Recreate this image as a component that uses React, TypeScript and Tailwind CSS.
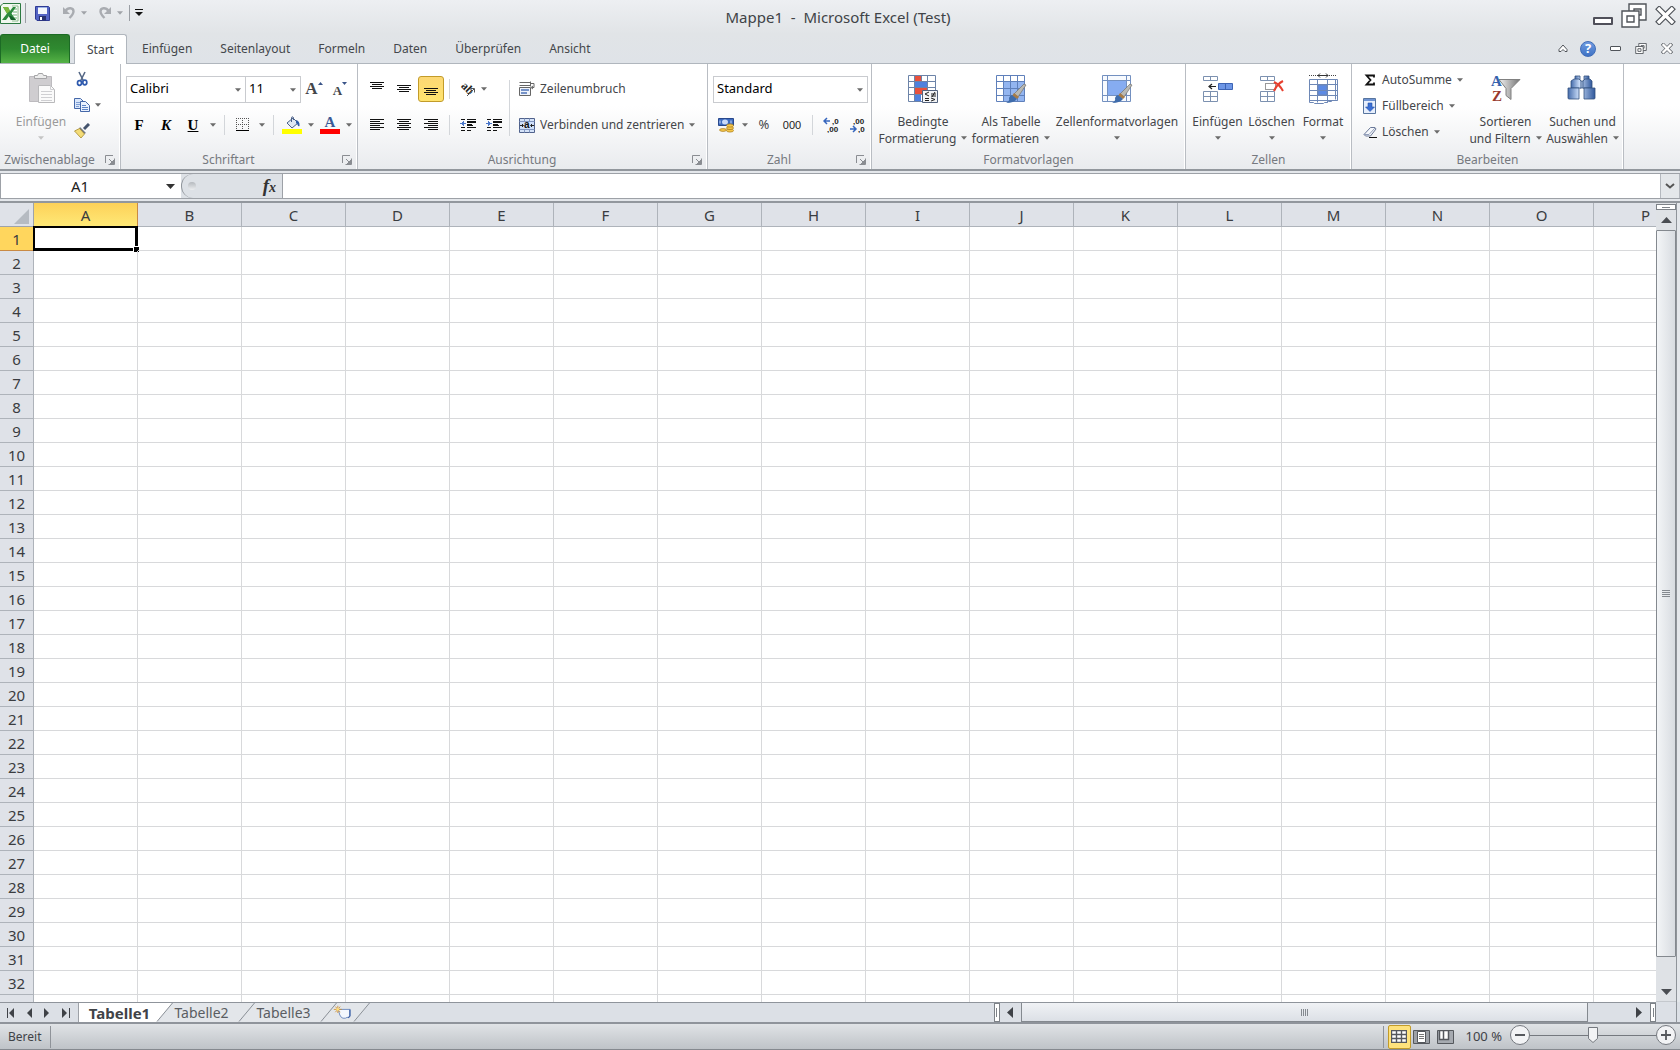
import React from 'react';

const COLUMNS = 'ABCDEFGHIJKLMNOP'.split('');
const ROWS = Array.from({ length: 32 }, (_, i) => i + 1);
const TABS = ['Einfügen', 'Seitenlayout', 'Formeln', 'Daten', 'Überprüfen', 'Ansicht'];

const Arrow: React.FC<{ className?: string }> = ({ className = 'text-[#6b6b6b]' }) => (
    <svg width="6" height="4" viewBox="0 0 7 4" className={`shrink-0 ${className}`} aria-hidden="true">
        <path d="M0 0h7L3.500 4z" fill="currentColor" />
    </svg>
);

const ArrowButton: React.FC<{ label: string; className?: string }> = ({ label, className }) => (
    <button type="button" aria-label={label} className="flex h-7 w-3 shrink-0 items-center justify-center">
        <Arrow className={className} />
    </button>
);

const Separator: React.FC = () => <div className="mx-[5px] h-5 w-px shrink-0 bg-[#d3d6da]" />;

const IconButton: React.FC<{ label: string; active?: boolean; children: React.ReactNode }> = ({ label, active, children }) => (
    <button
        type="button"
        aria-label={label}
        className={`flex h-[26px] w-[26px] shrink-0 items-center justify-center ${active ? 'rounded-[3px] border border-[#c29b29] bg-linear-to-b from-[#fcd874] to-[#ffe46e]' : ''}`}
    >
        {children}
    </button>
);

const BigButton: React.FC<{ lines: string[]; icon: React.ReactNode; className: string; disabled?: boolean }> = ({ lines, icon, className, disabled }) => (
    <button
        type="button"
        disabled={disabled}
        className={`flex shrink-0 flex-col items-center pt-[9px] leading-[17px] whitespace-nowrap ${disabled ? 'text-[#9a9a9a]' : ''} ${className}`}
    >
        {icon}
        <span className="mt-2">{lines[0]}</span>
        <span className="flex h-4 items-center gap-[5px]">
            {lines[1]}
            <Arrow className={disabled ? 'text-[#c4c4c4]' : undefined} />
        </span>
    </button>
);

const SmallButton: React.FC<{ text?: string; label?: string; icon: React.ReactNode; arrow?: boolean }> = ({ text, label, icon, arrow = true }) => (
    <button type="button" aria-label={label} className="flex h-[26px] items-center gap-[5px] whitespace-nowrap">
        {icon}
        {text && <span>{text}</span>}
        {arrow && <Arrow />}
    </button>
);

const Group: React.FC<{ title: string; width: string; launcher?: boolean; children: React.ReactNode }> = ({ title, width, launcher, children }) => (
    <section className={`flex shrink-0 flex-col border-r border-[#b9bdc3] shadow-[inset_-1px_0_#fff] ${width}`}>
        <div className="flex h-[86px]">{children}</div>
        <div className="flex h-[19px] items-center pt-px text-[#76797f]">
            <h2 className="flex-1 text-center">{title}</h2>
            {launcher && (
                <button type="button" aria-label={`${title} Optionen`} className="mr-[5px] ml-1.5 flex">
                    <svg width="10" height="10" viewBox="0 0 10 10">
                        <path d="M.5 8V.5H8M3.500 9.500h6v-6" fill="none" stroke="#8a8d92" />
                        <path d="M4 4l4 4M5 9h4V5z" stroke="#8a8d92" fill="#8a8d92" />
                    </svg>
                </button>
            )}
        </div>
    </section>
);

const Lines: React.FC<{ rows: number[][] }> = ({ rows }) => (
    <svg width="14" height="16" viewBox="0 0 14 16" stroke="#111" shapeRendering="crispEdges">
        {rows.map(([x1, x2, y]) => (
            <path key={y} d={`M${x1} ${y + 0.5}H${x2}`} />
        ))}
    </svg>
);

const vLines = (top: number) => [[0, 14, top], [2, 12, top + 2], [0, 14, top + 4], [2, 12, top + 6]];

const ExcelLogo = () => (
    <svg width="21" height="21" viewBox="0 0 21 21">
        <path d="M3 .5h17.500v20H.5V3z" fill="#f1f8ef" stroke="#2c7a41" />
        <path d="M12 3h6v15h-6" fill="#fff" stroke="#8cba8d" />
        <path d="M13 6h4M13 9h4M13 12h4M13 15h4" stroke="#6faf74" />
        <path d="M3 4h5l2 4 3-4h3l-4.500 6.500L16 17h-5l-2-4-3 4H2l5-6.500z" fill="#2c8a3d" />
        <path d="M3 4h5l2 4-3 2.500z" fill="#79b83d" />
        <path d="M11 13l5 4h-5l-2-4z" fill="#155f2b" />
    </svg>
);

const SaveIcon = () => (
    <svg width="15" height="15" viewBox="0 0 15 15">
        <path d="M.5.5h13l1 1v13H2l-1.500-1.500z" fill="#5363c4" stroke="#2f3b94" />
        <path d="M3 1h9v7H3z" fill="#f3f6fc" />
        <path d="M3 1h9v1H3z" fill="#9db4e6" />
        <path d="M4 10h7v4.500H4z" fill="#283170" />
        <path d="M5 11h2v3H5z" fill="#fff" />
    </svg>
);

const UndoIcon: React.FC<{ flip?: boolean }> = ({ flip }) => (
    <svg width="14" height="14" viewBox="0 0 14 14">
        <g transform={flip ? 'translate(14 0) scale(-1 1)' : undefined}>
            <path d="M3.500 5C6 1 11.500 1.500 11.500 5.500c0 2.500-1.500 4-4 6.500" fill="none" stroke="#a9acb1" strokeWidth="2.400" />
            <path d="M1 1v7h7z" fill="#a9acb1" />
        </g>
    </svg>
);

const PasteIcon = () => (
    <svg width="32" height="32" viewBox="0 0 32 32">
        <path d="M4.500 3.500h22v25h-22z" fill="#cfcdd0" stroke="#bdbbbf" />
        <path d="M9.500 5.500v-3h3l1-2h4l1 2h3v3z" fill="#ececec" stroke="#a5a5a7" />
        <path d="M13.500 12.500h12l4 4v13h-16z" fill="#fafafa" stroke="#b9b9bb" />
        <path d="M25.500 12.500v4h4M16 18.500h11M16 21.500h11M16 24.500h11M16 27.500h11" fill="none" stroke="#cfcfd2" />
    </svg>
);

const CutIcon = () => (
    <svg width="16" height="16" viewBox="0 0 16 16" fill="none">
        <path d="M5 1l4.500 9M11 1L6.500 10" stroke="#566886" strokeWidth="1.600" />
        <ellipse cx="5.500" cy="12" rx="2" ry="2.300" stroke="#2f5aae" strokeWidth="1.700" />
        <ellipse cx="10.800" cy="11.500" rx="2" ry="2.300" stroke="#2f5aae" strokeWidth="1.700" />
    </svg>
);

const CopyIcon = () => (
    <svg width="16" height="16" viewBox="0 0 16 16" stroke="#4568a9">
        <path d="M.5 1.500h6l3 3v7h-9z" fill="#dbe8fb" />
        <path d="M2 5.500h5M2 7.500h5M2 9.500h3" stroke="#7f9fd4" />
        <path d="M6.500 4.500h5l4 4v6h-9z" fill="#eaf2ff" />
        <path d="M8 8.500h4M8 10.500h6M8 12.500h6" stroke="#5d84c6" />
    </svg>
);

const BrushIcon = () => (
    <svg width="16" height="16" viewBox="0 0 16 16">
        <path d="M15 1l-5 5" stroke="#43536d" strokeWidth="3" />
        <path d="M6 4l6 6-2 1-5-5z" fill="#6f7682" />
        <path d="M5.500 5.500L.5 8 7 15l3.500-4z" fill="#f4dc77" stroke="#a68a30" strokeWidth=".8" />
    </svg>
);

const BorderIcon = () => (
    <svg width="14" height="14" viewBox="0 0 14 14" shapeRendering="crispEdges">
        <path d="M.5 0v12M6.500 0v12M12.500 0v12M0 .5h13M0 6.500h13" stroke="#555" strokeDasharray="1 1" />
        <path d="M0 12.500h13" stroke="#000" strokeWidth="1" />
    </svg>
);

const FillIcon = () => (
    <svg width="20" height="18" viewBox="0 0 20 18">
        <path d="M5 7l6-5 5 5-6 5z" fill="#dfe8f4" stroke="#4a6188" />
        <path d="M9.500 6V1.500q0-1.500 2 0V4" fill="none" stroke="#4a6188" />
        <path d="M14 4q4 1 3.500 6-1.500 1-2-1.500L14 7z" fill="#2d5ca8" />
        <path d="M0 13h20v5H0z" fill="#ffff00" />
    </svg>
);

const OrientationIcon = () => (
    <svg width="18" height="18" viewBox="0 0 18 18">
        <text x="1" y="8" transform="rotate(45 3 8)" fontFamily="Liberation Serif, serif" fontSize="12" fontWeight="bold" fill="#222">ab</text>
        <path d="M8 16l7-7M11.500 8.500h4v4" fill="none" stroke="#555" />
    </svg>
);

const IndentIcon: React.FC<{ right?: boolean }> = ({ right }) => (
    <svg width="16" height="14" viewBox="0 0 16 14" shapeRendering="crispEdges">
        <path d="M1 1.500h4M7 1.500h9M7 4h9M7 7h6M1 9.500h4M7 9.500h9M1 12.500h4M7 12.500h4" stroke="#111" />
        <path d="M7 4h9M7 7h5" stroke="#111" strokeWidth="2" />
        <path d={right ? 'M0 5h2V3l4 2.500L2 8V6H0z' : 'M6 5H4V3L0 5.500 4 8V6h2z'} fill="#4a76c9" />
    </svg>
);

const WrapIcon = () => (
    <svg width="16" height="16" viewBox="0 0 16 16" fill="none">
        <path d="M.5 1.500h11M.5 4.500h11M11.500.5v5" stroke="#666" />
        <path d="M.5 6.500h11v8H.5z" fill="#eef3fb" stroke="#666" />
        <path d="M2 9h8M2 12h6" stroke="#4d73b8" strokeWidth="1.500" />
        <path d="M12 2.500h3v4h-2M14 5l-2 1.500L14 8" stroke="#666" />
    </svg>
);

const MergeIcon = () => (
    <svg width="16" height="15" viewBox="0 0 16 15">
        <path d="M.5.5h15v14H.5z" fill="#d4e2f8" stroke="#50628c" />
        <path d="M.5 3.500h15M.5 11.500h15M5.500.5v3M10.500.5v3M5.500 11.500v3M10.500 11.500v3" stroke="#8297c1" />
        <path d="M1 4h14v7H1z" fill="#cfdff9" />
        <path d="M1 7.500h3M12 7.500h3M3 6l1.500 1.500L3 9M13 6l-1.500 1.500L13 9" stroke="#222" fill="none" />
        <text x="5" y="10" fontFamily="Liberation Sans, sans-serif" fontSize="10" fontWeight="bold" fill="#111">a</text>
    </svg>
);

const MoneyIcon = () => (
    <svg width="16" height="16" viewBox="0 0 16 16">
        <path d="M.5 1.500h15v7H.5z" fill="#3d6bc0" stroke="#28488c" />
        <ellipse cx="7" cy="5" rx="3" ry="2.500" fill="#c9dafa" />
        <path d="M2 3.500v3M13 3.500v3" stroke="#c9dafa" />
        <g fill="#f4c64a" stroke="#a87a1a" strokeWidth=".7">
            <ellipse cx="12" cy="13.500" rx="3.500" ry="1.600" />
            <ellipse cx="12" cy="11" rx="3.500" ry="1.600" />
            <ellipse cx="12" cy="8.500" rx="3.500" ry="1.600" />
            <ellipse cx="5" cy="13" rx="3.500" ry="1.400" />
        </g>
    </svg>
);

const DecimalIcon: React.FC<{ more?: boolean }> = ({ more }) => (
    <svg width="16" height="16" viewBox="0 0 16 16" fontFamily="Liberation Sans, sans-serif" fontSize="8" fontWeight="bold" fill="#222">
        <text x={more ? 9 : 4} y="7">{more ? ',0' : ',00'}</text>
        <text x={more ? 4 : 9} y="15">{more ? ',00' : ',0'}</text>
        <path d={more ? 'M7 4H1M4 1L1 4l3 3' : 'M1 12h6M4 9l3 3-3 3'} fill="none" stroke="#3565bd" strokeWidth="1.500" />
    </svg>
);

const Brush32 = () => (
    <>
        <path d="M29 11l2 1-8 12-4-3z" fill="#b9b9b4" stroke="#76736b" strokeWidth=".7" />
        <path d="M19 20l5 4-2 2-5-3z" fill="#a87c46" />
        <path d="M17 22l5 4q-3 4-11 4 4-2 3-5 1-3 3-3z" fill="#3f6cab" />
    </>
);

const ConditionalIcon = () => (
    <svg width="32" height="32" viewBox="0 0 32 32">
        <path d="M1.500 2.500h27v26h-27z" fill="#fff" />
        <path d="M8 3h7v5H8zM8 15h12v6H8z" fill="#e8503c" />
        <path d="M8 9h12v5H8zM8 22h6v6H8z" fill="#4f80dd" />
        <path d="M1.500 2.500h27v26h-27zM7.500 2.500v26M14.500 2.500v5M20.500 2.500v26M1.500 8.500h27M1.500 14.500h27M1.500 21.500h27" fill="none" stroke="#6c83a8" />
        <path d="M15.500 17.500h15v12h-15z" fill="#f3f4f6" stroke="#53627c" />
        <path d="M22 19l-4 2 4 2M18 25.500h4M18 27.500h4M24 21h5M24 23h5M28 19l-3 5M24 25l4 1.500-4 1.500" fill="none" stroke="#222" />
    </svg>
);

const TableIcon = () => (
    <svg width="32" height="32" viewBox="0 0 32 32">
        <path d="M1.500 2.500h28v26h-28z" fill="#fff" />
        <path d="M8 8h21v20H8z" fill="#93b5f0" />
        <path d="M1.500 2.500h28v26h-28zM8.500 2.500v26M15.500 2.500v26M22.500 2.500v26M1.500 8.500h28M1.500 15.500h28M1.500 22.500h28" fill="none" stroke="#5f80bb" />
        <Brush32 />
    </svg>
);

const StyleIcon = () => (
    <svg width="32" height="32" viewBox="0 0 32 32">
        <path d="M1.500 2.500h28v26h-28z" fill="#f7fafe" />
        <path d="M7 8h18v14H7z" fill="#86acf1" />
        <path d="M1.500 2.500h28v26h-28zM6.500 2.500v26M25.500 2.500v26M1.500 7.500h28M1.500 22.500h28" fill="none" stroke="#7390c0" />
        <Brush32 />
    </svg>
);

const InsertIcon = () => (
    <svg width="32" height="32" viewBox="0 0 32 32" fill="#fff" stroke="#7c91b0">
        <path d="M1.500 3.500h14v4h-14zM8.500 3.500v4M1.500 18.500h14v10h-14zM8.500 18.500v10M1.500 23.500h14" />
        <path d="M16.500 10.500h14v6h-14z" fill="#6d96e6" stroke="#3d64b4" />
        <path d="M23.500 10.500v6" stroke="#3d64b4" />
        <path d="M14 13.500H8M10 11l-3 2.500 3 2.500" fill="none" stroke="#222" strokeWidth="1.200" />
    </svg>
);

const DeleteIcon = () => (
    <svg width="32" height="32" viewBox="0 0 32 32" fill="#fff" stroke="#7c91b0">
        <path d="M4.500 3.500h14v4h-14zM11.500 3.500v4M4.500 18.500h14v10h-14zM11.500 18.500v10M4.500 23.500h14" />
        <path d="M9.500 10.500h10v6h-10z" fill="none" stroke="#333" strokeDasharray="1 1" />
        <path d="M18 9q6 3 9 9M27 8q-6 3-9 10" fill="none" stroke="#e7402f" strokeWidth="2" />
    </svg>
);

const FormatIcon = () => (
    <svg width="32" height="32" viewBox="0 0 32 32" fill="#fff" stroke="#6e88b6">
        <path d="M2.500 6.500h28v21h-5l-1 1h-3l-1 1h-3l-1 1h-9l-1-1h-4z" />
        <path d="M11 12h9v10h-9z" fill="#5c8ae4" />
        <path d="M10.500 6.500v23M20.500 6.500v23M28.500 6.500v20M2.500 11.500h28M2.500 17.500h28M2.500 22.500h28M2.500 27.500h28" fill="none" />
        <path d="M2 2.500h27" stroke="#444" strokeDasharray="1 1" />
        <path d="M11 2.500h10M13 .5l-2 2 2 2M19 .5l2 2-2 2" fill="none" stroke="#333" />
    </svg>
);

const SortIcon = () => (
    <svg width="32" height="32" viewBox="0 0 32 32" fontWeight="bold" fontFamily="Liberation Serif, serif" fontSize="15">
        <defs>
            <linearGradient id="funnel">
                <stop offset="0" stopColor="#f1f1f1" />
                <stop offset="1" stopColor="#747474" />
            </linearGradient>
        </defs>
        <path d="M9 6.500h21l-9 9v11l-5-4v-7z" fill="url(#funnel)" stroke="#808080" />
        <text x="1" y="13" fill="#3562ad">A</text>
        <text x="2" y="28" fill="#9a3a2e">Z</text>
    </svg>
);

const FindIcon = () => (
    <svg width="32" height="32" viewBox="0 0 32 32" stroke="#33507f">
        <defs>
            <linearGradient id="lens">
                <stop offset="0" stopColor="#456cab" />
                <stop offset=".4" stopColor="#c8dbf7" />
                <stop offset="1" stopColor="#30589c" />
            </linearGradient>
        </defs>
        <g fill="url(#lens)" strokeWidth=".8">
            <path d="M8 3h5v4H8zM17 3h5v4h-5zM13 8h4v7h-4z" />
            <path d="M7 6h5l2 2v7H4V8zM18 6h5l2 2v7h-9V8z" />
            <path d="M1 15h11v11H2q-1 0-1-1zM17 15h11v10q0 1-1 1H17z" />
        </g>
    </svg>
);

const SigmaIcon = () => (
    <svg width="14" height="14" viewBox="0 0 14 14">
        <path d="M11 4.500V2.500H3.500l4 4.500-4 4.500H11v-2" fill="none" stroke="#111" strokeWidth="1.800" />
    </svg>
);

const FillDownIcon = () => (
    <svg width="14" height="16" viewBox="0 0 14 16">
        <path d="M.5.5h12v15H.5z" fill="#e7effc" stroke="#57759f" />
        <path d="M1 1h11v2H1z" fill="#6f94d3" />
        <path d="M5 5h4v4h2.500L7 13.500 2.500 9H5z" fill="#3b6fd4" stroke="#2451a8" strokeWidth=".6" />
    </svg>
);

const EraserIcon = () => (
    <svg width="14" height="14" viewBox="0 0 14 14">
        <path d="M7.500 2.500h4.500l1 1.500-5.500 7h-5L1 9.500z" fill="#f6f8fc" stroke="#6a7898" />
        <path d="M1 9.500h5L12 3" fill="none" stroke="#93a0bb" />
        <path d="M6 12.500h8" stroke="#111" />
    </svg>
);

const CrossIcon: React.FC<{ size: string; width: number }> = ({ size, width }) => (
    <svg viewBox="0 0 20 18" className={size} fill="none" strokeLinecap="square">
        <path d="M4 3l12 12M16 3L4 15" stroke="#50545a" strokeWidth={width} />
        <path d="M4 3l12 12M16 3L4 15" stroke="#fff" strokeWidth={width - 2.2} />
    </svg>
);

const RestoreIcon: React.FC<{ size: string; stroke: number }> = ({ size, stroke }) => (
    <svg viewBox="0 0 26 25" className={size} fill="#fff" stroke="#50545a" strokeWidth={stroke}>
        <path d="M8 1h17v16H8zM13 6h7v6h-7z" />
        <path d="M1 8h17v16H1zM6 13h7v6H6z" />
    </svg>
);

const TitleBar = () => (
    <header className="flex h-[34px] shrink-0 bg-linear-to-b from-[#edeff2] to-[#e1e4e7]">
        <div className="flex flex-1 items-start pt-[3px]">
            <ExcelLogo />
            <div className="mx-1 h-5 w-px bg-[#9a9ea4]" />
            <div className="flex h-5 items-center pl-[5px]">
                <button type="button" aria-label="Speichern"><SaveIcon /></button>
                <button type="button" aria-label="Rückgängig" disabled className="ml-3"><UndoIcon /></button>
                <ArrowButton label="Rückgängig Liste" className="ml-1 text-[#a0a3a8]" />
                <button type="button" aria-label="Wiederholen" disabled className="ml-2.5"><UndoIcon flip /></button>
                <ArrowButton label="Wiederholen Liste" className="ml-1 text-[#a0a3a8]" />
                <div className="mx-[5px] h-4 w-px bg-[#9a9ea4]" />
                <button type="button" aria-label="Symbolleiste anpassen">
                    <svg width="8" height="8" viewBox="0 0 8 8">
                        <path d="M0 .5h8" stroke="#111" />
                        <path d="M0 3h8L4 7z" fill="#111" />
                    </svg>
                </button>
            </div>
        </div>
        <h1 className="pt-[7px] text-[15px] leading-[21px] whitespace-pre text-[#404347]">Mappe1  -  Microsoft Excel (Test)</h1>
        <div className="flex flex-1 justify-end gap-2 pt-[3px] pr-1">
            <button type="button" aria-label="Minimieren" className="mt-[14px] h-2 w-5 rounded-[1px] border-2 border-[#50505a] bg-white" />
            <button type="button" aria-label="Wiederherstellen" className="flex"><RestoreIcon size="h-[25px] w-[26px]" stroke={1.4} /></button>
            <button type="button" aria-label="Schließen" className="flex pt-[3px]"><CrossIcon size="h-[19px] w-[21px]" width={5.5} /></button>
        </div>
    </header>
);

const TabBar = () => (
    <nav className="flex h-[30px] shrink-0 border-b border-[#b0b6bd] bg-linear-to-b from-[#e1e4e7] to-[#dfe3e8] text-[#44474b]">
        <button type="button" className="mr-1 w-[70px] rounded-t-[3px] border border-b-0 border-[#1c6b25] bg-linear-to-b from-[#2b7b2b] via-[#2f8a30] to-[#55b346] text-white">Datei</button>
        <button type="button" className="-mb-px w-[53px] rounded-t-[3px] border border-b-0 border-[#b0b6bd] bg-white">Start</button>
        <div className="flex pt-px pl-px">
            {TABS.map((tab) => (
                <button key={tab} type="button" className="px-[14px]">{tab}</button>
            ))}
        </div>
        <div className="flex flex-1 items-center justify-end pr-[7px]">
            <button type="button" aria-label="Menüband minimieren" className="mr-3">
                <svg width="10" height="9" viewBox="0 0 10 9" fill="#fff" stroke="#50545a">
                    <path d="M5 1l4 4.500v2H7L5 5.500 3 7.500H1v-2z" />
                </svg>
            </button>
            <button type="button" aria-label="Hilfe" className="mr-[14px] flex size-4 items-center justify-center rounded-full border border-[#3f6cb8] bg-linear-to-b from-[#6f9be0] to-[#3f72c4] text-[13px] font-bold text-white">?</button>
            <button type="button" aria-label="Mappe minimieren" className="mr-[14px] h-[5px] w-[11px] rounded-[1px] border border-[#50545a] bg-white" />
            <button type="button" aria-label="Mappe wiederherstellen" className="mr-[14px]"><RestoreIcon size="h-[11px] w-[12px]" stroke={2} /></button>
            <button type="button" aria-label="Mappe schließen"><CrossIcon size="h-[11px] w-[12px]" width={6} /></button>
        </div>
    </nav>
);

const Combo: React.FC<{ label: string; value: string; width: string }> = ({ label, value, width }) => (
    <div className={`relative h-[27px] border border-[#c9cbcf] bg-white ${width}`}>
        <select aria-label={label} className="h-full w-full appearance-none pl-[3px] text-[13px] text-black outline-none">
            <option>{value}</option>
        </select>
        <Arrow className="pointer-events-none absolute top-[11px] right-1 text-[#6b6b6b]" />
    </div>
);

const Ribbon = () => (
    <div className="flex h-[107px] shrink-0 border-b-2 border-[#92979d] bg-linear-to-b from-white via-white via-40% to-[#e9ebee] text-[#44464a]">
        <Group title="Zwischenablage" width="w-[121px]" launcher>
            <BigButton lines={['Einfügen', '']} icon={<PasteIcon />} className="w-[74px] pl-2" disabled />
            <div className="flex flex-col pt-[2px]">
                <SmallButton label="Ausschneiden" icon={<CutIcon />} arrow={false} />
                <SmallButton label="Kopieren" icon={<CopyIcon />} />
                <SmallButton label="Format übertragen" icon={<BrushIcon />} arrow={false} />
            </div>
        </Group>
        <Group title="Schriftart" width="w-[237px]" launcher>
            <div className="flex flex-col gap-2 pt-[11px] pl-[5px]">
                <div className="flex h-7 items-center">
                    <Combo label="Schriftart" value="Calibri" width="w-[120px]" />
                    <Combo label="Schriftgrad" value="11" width="-ml-px w-[56px]" />
                    <IconButton label="Schriftgrad vergrößern">
                        <span className="font-['Liberation_Serif',serif] text-[17px] font-bold">A</span>
                        <svg width="5" height="14" viewBox="0 0 5 14"><path d="M0 3h5L2.500 0z" fill="#3a5488" /></svg>
                    </IconButton>
                    <IconButton label="Schriftgrad verkleinern">
                        <span className="pt-1 font-['Liberation_Serif',serif] text-[13px] font-bold">A</span>
                        <svg width="5" height="14" viewBox="0 0 5 14"><path d="M0 0h5L2.500 3z" fill="#3a5488" /></svg>
                    </IconButton>
                </div>
                <div className="flex h-7 items-center font-['Liberation_Serif',serif] text-[15px] font-bold text-black">
                    <div className="flex gap-px pr-px">
                        <IconButton label="Fett">F</IconButton>
                        <IconButton label="Kursiv"><i>K</i></IconButton>
                        <IconButton label="Unterstrichen"><u>U</u></IconButton>
                    </div>
                    <ArrowButton label="Unterstreichung" />
                    <Separator />
                    <IconButton label="Rahmen"><BorderIcon /></IconButton>
                    <ArrowButton label="Rahmen Liste" />
                    <Separator />
                    <IconButton label="Füllfarbe"><FillIcon /></IconButton>
                    <ArrowButton label="Füllfarbe Liste" />
                    <IconButton label="Schriftfarbe">
                        <span className="flex w-5 flex-col items-center border-b-5 border-[#f00] leading-[13px] text-[#3c5a96]">A</span>
                    </IconButton>
                    <ArrowButton label="Schriftfarbe Liste" />
                </div>
            </div>
        </Group>
        <Group title="Ausrichtung" width="w-[350px]" launcher>
            <div className="flex w-[147px] flex-col gap-2 pt-[11px] pl-[6px]">
                <div className="flex h-7 items-center">
                    <div className="flex gap-px">
                        <IconButton label="Oben ausrichten"><Lines rows={vLines(1)} /></IconButton>
                        <IconButton label="Zentriert ausrichten"><Lines rows={vLines(4)} /></IconButton>
                        <IconButton label="Unten ausrichten" active><Lines rows={vLines(7)} /></IconButton>
                    </div>
                    <Separator />
                    <IconButton label="Orientierung"><OrientationIcon /></IconButton>
                    <Arrow />
                </div>
                <div className="flex h-7 items-center">
                    <div className="flex gap-px">
                        <IconButton label="Linksbündig">
                            <Lines rows={[[0, 14, 2], [0, 10, 4], [0, 14, 6], [0, 10, 8], [0, 14, 10], [0, 10, 12]]} />
                        </IconButton>
                        <IconButton label="Zentriert">
                            <Lines rows={[[0, 14, 2], [2, 12, 4], [0, 14, 6], [2, 12, 8], [0, 14, 10], [2, 12, 12]]} />
                        </IconButton>
                        <IconButton label="Rechtsbündig">
                            <Lines rows={[[0, 14, 2], [4, 14, 4], [0, 14, 6], [4, 14, 8], [0, 14, 10], [4, 14, 12]]} />
                        </IconButton>
                    </div>
                    <Separator />
                    <IconButton label="Einzug verkleinern"><IndentIcon /></IconButton>
                    <IconButton label="Einzug vergrößern"><IndentIcon right /></IconButton>
                </div>
            </div>
            <div className="mt-4 ml-1 h-14 w-px bg-[#d3d6da]" />
            <div className="flex flex-col gap-2.5 pt-3 pl-[9px]">
                <SmallButton text="Zeilenumbruch" icon={<WrapIcon />} arrow={false} />
                <SmallButton text="Verbinden und zentrieren" icon={<MergeIcon />} />
            </div>
        </Group>
        <Group title="Zahl" width="w-[164px]" launcher>
            <div className="flex flex-col gap-2 pt-[11px] pl-[5px]">
                <div className="flex h-7 items-center">
                    <Combo label="Zahlenformat" value="Standard" width="w-[155px]" />
                </div>
                <div className="flex h-7 items-center">
                    <IconButton label="Buchhaltungsformat"><MoneyIcon /></IconButton>
                    <ArrowButton label="Buchhaltungsformat Liste" />
                    <IconButton label="Prozent"><span className="text-[13px]">%</span></IconButton>
                    <button type="button" className="w-[30px] font-['Liberation_Sans_Narrow','Liberation_Sans',sans-serif] text-[11px] text-[#222]">000</button>
                    <Separator />
                    <IconButton label="Dezimalstelle hinzufügen"><DecimalIcon more /></IconButton>
                    <IconButton label="Dezimalstelle löschen"><DecimalIcon /></IconButton>
                </div>
            </div>
        </Group>
        <Group title="Formatvorlagen" width="w-[314px]">
            <BigButton lines={['Bedingte', 'Formatierung']} icon={<ConditionalIcon />} className="ml-1 w-[94px]" />
            <BigButton lines={['Als Tabelle', 'formatieren']} icon={<TableIcon />} className="w-[82px]" />
            <BigButton lines={['Zellenformatvorlagen', '']} icon={<StyleIcon />} className="w-[130px]" />
        </Group>
        <Group title="Zellen" width="w-[166px]">
            <BigButton lines={['Einfügen', '']} icon={<InsertIcon />} className="ml-1 w-[55px]" />
            <BigButton lines={['Löschen', '']} icon={<DeleteIcon />} className="w-[53px]" />
            <BigButton lines={['Format', '']} icon={<FormatIcon />} className="w-[50px]" />
        </Group>
        <Group title="Bearbeiten" width="w-[272px]">
            <div className="flex w-[115px] flex-col pt-[3px] pl-[11px]">
                <SmallButton text="AutoSumme" icon={<SigmaIcon />} />
                <SmallButton text="Füllbereich" icon={<FillDownIcon />} />
                <SmallButton text="Löschen" icon={<EraserIcon />} />
            </div>
            <BigButton lines={['Sortieren', 'und Filtern']} icon={<SortIcon />} className="w-[77px]" />
            <BigButton lines={['Suchen und', 'Auswählen']} icon={<FindIcon />} className="w-[77px]" />
        </Group>
    </div>
);

const FormulaBar = () => (
    <div className="flex h-8 shrink-0 border-b-2 border-[#92979d] bg-[#e4e7eb] pt-[2px] pb-[2px]">
        <div className="flex flex-1 border-y border-[#9da1a7] bg-[#dde1e6]">
            <input aria-label="Namenfeld" defaultValue="A1" className="w-[159px] border-l border-[#9da1a7] bg-white text-center text-[15px] text-[#222] outline-none" />
            <button type="button" aria-label="Namenfeld Liste" className="flex w-[22px] items-center justify-center bg-white">
                <svg width="9" height="5" viewBox="0 0 9 5"><path d="M0 0h9L4.500 5z" fill="#333" /></svg>
            </button>
            <div className="flex w-[101px] items-center justify-between rounded-l-full border-l border-[#8f949a] pr-1.5 pl-1.5">
                <span className="h-2 w-2 rounded-full bg-linear-to-b from-[#b5b9be] to-[#eceef0]" />
                <button type="button" aria-label="Funktion einfügen" className="flex items-end font-['Liberation_Serif',serif] text-[19px] leading-5 font-bold text-[#333] italic">
                    f<span className="text-[14px] leading-4">x</span>
                </button>
            </div>
            <input aria-label="Bearbeitungsleiste" className="flex-1 border-l border-[#9da1a7] bg-white px-1 text-[15px] outline-none" />
            <button type="button" aria-label="Bearbeitungsleiste erweitern" className="flex w-5 items-center justify-center border-x border-[#b4b8be] bg-[#e4e7ea]">
                <svg width="10" height="6" viewBox="0 0 10 6"><path d="M1 1l4 3.500L9 1" fill="none" stroke="#555" strokeWidth="2" /></svg>
            </button>
        </div>
    </div>
);

const Grid = () => (
    <div className="min-w-0 flex-1 overflow-hidden bg-white">
        <table className="w-[1698px] table-fixed border-separate border-spacing-0 text-[15px] leading-[22px] text-[#3a3c40]">
            <thead>
                <tr className="h-6">
                    <th scope="col" aria-label="Alles markieren" className="w-[34px] border-r border-b border-[#9ea3aa] bg-[#dfe2e8] p-0">
                        <svg width="32" height="20" viewBox="0 0 32 20" className="block"><path d="M29 4v15H14z" fill="#b6bbc2" /></svg>
                    </th>
                    {COLUMNS.map((col, i) => (
                        <th
                            key={col}
                            scope="col"
                            className={`h-6 border-r border-b p-0 font-normal ${i === 0 ? 'border-[#c98a45] bg-linear-to-b from-[#fdd158] to-[#fee876]' : 'border-[#aeb3ba] bg-[#dfe2e8]'}`}
                        >
                            {col}
                        </th>
                    ))}
                </tr>
            </thead>
            <tbody>
                {ROWS.map((row) => (
                    <tr key={row} className="h-6">
                        <th scope="row" className={`h-6 border-r border-b p-0 font-normal ${row === 1 ? 'border-[#c98a45] bg-[#ffd65d]' : 'border-[#aeb3ba] bg-[#dfe2e8]'}`}>{row}</th>
                        {COLUMNS.map((col) => (
                            <td key={col} className="relative border-r border-b border-[#d8d9db] p-0">
                                {row === 1 && col === 'A' && (
                                    <div className="absolute -inset-px border-2 border-r-3 border-b-3 border-black">
                                        <span className="absolute -right-1 -bottom-1 size-[6px] border-t border-l border-white bg-black" />
                                    </div>
                                )}
                            </td>
                        ))}
                    </tr>
                ))}
                <tr className="h-6">
                    <td className="border-r border-[#aeb3ba] bg-[#dfe2e8]" />
                    {COLUMNS.map((col) => (
                        <td key={col} className="border-r border-[#d8d9db]" />
                    ))}
                </tr>
            </tbody>
        </table>
    </div>
);

const VerticalScroll = () => (
    <div className="mr-[3px] flex w-[21px] shrink-0 flex-col border-r border-[#8f949a] bg-[#dfe2e6]">
        <div className="mt-px h-[6px] border border-[#7d8288] bg-white p-px"><div className="mx-1 mt-px h-px bg-[#7d8288]" /></div>
        <button type="button" aria-label="Nach oben" className="flex h-5 items-center justify-center">
            <svg width="11" height="6" viewBox="0 0 11 6"><path d="M0 6h11L5.500 0z" fill="#4a4d52" /></svg>
        </button>
        <div className="flex flex-1 flex-col items-center justify-center rounded-[1px] border border-[#84898f] bg-linear-to-r from-[#f3f5f7] to-[#d8dce1]">
            <div className="h-[7px] w-2 border-y border-[#84898f] py-px"><div className="h-[3px] border-y border-[#84898f]" /></div>
        </div>
        <button type="button" aria-label="Nach unten" className="mt-[25px] flex h-5 items-center justify-center border-b border-[#c4c8cd]">
            <svg width="11" height="6" viewBox="0 0 11 6"><path d="M0 0h11L5.500 6z" fill="#4a4d52" /></svg>
        </button>
    </div>
);

const Slope: React.FC<{ left: string; right?: string }> = ({ left, right = '#e3e6ea' }) => (
    <svg width="17" height="19" viewBox="0 0 17 19" className="shrink-0">
        <path d="M0 0h16L1 19H0z" fill={left} />
        <path d="M16 1h1v18H2z" fill={right} />
        <path d="M16.500 0L1 18.500" stroke="#8b9097" fill="none" />
    </svg>
);

const SheetNav = () => (
    <div className="flex h-full w-[79px] items-center justify-around border-r border-[#9da1a7] pr-[2px] pl-px text-[#3f4247]">
        <button type="button" aria-label="Erstes Blatt"><svg width="8" height="10" viewBox="0 0 8 10" fill="currentColor"><path d="M0 0h1v10H0zM7 0v10L2 5z" /></svg></button>
        <button type="button" aria-label="Vorheriges Blatt"><svg width="6" height="10" viewBox="0 0 6 10" fill="currentColor"><path d="M5 0v10L0 5z" /></svg></button>
        <button type="button" aria-label="Nächstes Blatt"><svg width="6" height="10" viewBox="0 0 6 10" fill="currentColor"><path d="M0 0v10l5-5z" /></svg></button>
        <button type="button" aria-label="Letztes Blatt"><svg width="8" height="10" viewBox="0 0 8 10" fill="currentColor"><path d="M7 0h1v10H7zM0 0v10l5-5z" /></svg></button>
    </div>
);

const SheetBar = () => (
    <div className="flex h-[22px] shrink-0 border-b-2 border-[#8f949b] bg-[#dce0e6]">
        <div className="flex flex-3 border-t border-[#8f949b] text-[14px] leading-[18px] text-[#5a5d62]">
            <SheetNav />
            <button type="button" className="w-[77px] bg-white pl-1 text-[15px] font-bold text-[#404347]">Tabelle1</button>
            <Slope left="#fff" />
            <button type="button" className="w-[65px] bg-[#e3e6ea] pr-2">Tabelle2</button>
            <Slope left="#e3e6ea" />
            <button type="button" className="w-[65px] bg-[#e3e6ea] pr-2">Tabelle3</button>
            <Slope left="#e3e6ea" />
            <button type="button" aria-label="Tabellenblatt einfügen" className="bg-[#e3e6ea]">
                <svg width="16" height="18" viewBox="0 0 20 18" className="overflow-visible">
                    <path d="M1.500 4.500h15v8l-2 2h-2l-2 1h-3l-2-1-2-3z" fill="#f3f7fd" stroke="#5878b5" />
                    <path d="M16 5v8l-2 2" stroke="#3f62a8" strokeWidth="1.500" fill="none" />
                    <path d="M1 0v9M-4 4.500h10M-2 1l6 7M4 1l-6 7" stroke="#d08a26" />
                    <circle cx="1" cy="4.500" r="1.800" fill="#ffe07a" />
                </svg>
            </button>
            <Slope left="#e3e6ea" right="#dce0e6" />
        </div>
        <div className="flex flex-2 border-t border-[#8f949b]">
            <div className="flex w-[6px] justify-center border border-[#7d8288] bg-white py-1"><div className="w-px bg-[#7d8288]" /></div>
            <button type="button" aria-label="Nach links" className="flex w-[21px] items-center justify-center">
                <svg width="6" height="11" viewBox="0 0 6 11"><path d="M6 0v11L0 5.500z" fill="#3f4247" /></svg>
            </button>
            <div className="flex flex-1 items-center justify-center border border-t-0 border-[#84898f] bg-linear-to-b from-[#f0f2f5] to-[#dce0e6]">
                <div className="flex h-[7px] w-[7px] justify-between">
                    {[0, 1, 2, 3].map((i) => <span key={i} className="w-px bg-[#84898f]" />)}
                </div>
            </div>
            <button type="button" aria-label="Nach rechts" className="ml-10 flex w-[21px] items-center justify-center">
                <svg width="6" height="11" viewBox="0 0 6 11"><path d="M0 0v11l6-5.500z" fill="#3f4247" /></svg>
            </button>
            <div className="ml-px flex w-[6px] justify-center border border-[#7d8288] bg-white py-1"><div className="w-px bg-[#7d8288]" /></div>
        </div>
        <div className="mr-[3px] w-[21px] border-r border-[#8f949a]" />
    </div>
);

const StatusBar = () => (
    <footer className="flex h-[26px] shrink-0 items-center border-b border-[#85898f] bg-linear-to-b from-[#e0e3e6] to-[#bfc3c8] text-[#3f4247]">
        <span className="w-[50px] pl-2">Bereit</span>
        <div className="h-[22px] w-px bg-[#8f9399]" />
        <div className="flex-1" />
        <div className="mr-1 h-[22px] w-px bg-[#8f9399]" />
        <button type="button" aria-label="Normal" className="flex h-[24px] w-[23px] items-center justify-center rounded-[2px] border border-[#c29b29] bg-[#fee27c]">
            <svg width="16" height="13" viewBox="0 0 16 13" fill="#fff" stroke="#55585d"><path d="M.5.500h15v12H.5zM5.500.500v12M10.500.500v12M.5 4.500h15M.5 8.500h15" strokeWidth="1.400" /></svg>
        </button>
        <button type="button" aria-label="Seitenlayout" className="ml-[2px]">
            <svg width="17" height="14" viewBox="0 0 17 14"><path d="M.5.500h16v13H.5z" fill="#9da1a7" stroke="#55585d" /><path d="M4.500 1.500h8v11h-8z" fill="#fff" stroke="#55585d" /><path d="M6 4.500h5M6 6.500h5M6 8.500h5" stroke="#777" /></svg>
        </button>
        <button type="button" aria-label="Umbruchvorschau" className="ml-[7px]">
            <svg width="17" height="14" viewBox="0 0 17 14"><path d="M.5.500h16v13H.5z" fill="#a6aab0" stroke="#55585d" /><path d="M2.500.500h4v9h-4zM6.500.500h5v9h-5z" fill="#fff" stroke="#55585d" strokeWidth="1.500" /></svg>
        </button>
        <button type="button" className="ml-3 text-[13px]">100 %</button>
        <div className="relative ml-2 flex w-[166px] items-center pb-[3px]">
            <svg width="166" height="20" viewBox="0 0 166 20" fill="#f2f3f5" stroke="#75797f">
                <path d="M20 10.500h126M83.500 5v11" />
                <circle cx="10" cy="10" r="9.500" />
                <circle cx="156" cy="10" r="9.500" />
                <path d="M5 10h10M151 10h10M156 5v10" stroke="#55585d" strokeWidth="1.800" />
                <path d="M78.500 2.500h9v11l-4.500 4-4.500-4z" />
            </svg>
            <input type="range" aria-label="Zoom" min="10" max="190" defaultValue="100" className="absolute inset-x-5 h-5 w-[126px] opacity-0" />
        </div>
        <div className="w-1" />
    </footer>
);

export default function App() {
    return (
        <div className="flex h-screen flex-col overflow-hidden bg-[#e4e7eb] font-['Noto_Sans',sans-serif] text-[12px]">
            <TitleBar />
            <TabBar />
            <Ribbon />
            <FormulaBar />
            <main className="flex min-h-0 flex-1">
                <Grid />
                <VerticalScroll />
            </main>
            <SheetBar />
            <StatusBar />
        </div>
    );
}
